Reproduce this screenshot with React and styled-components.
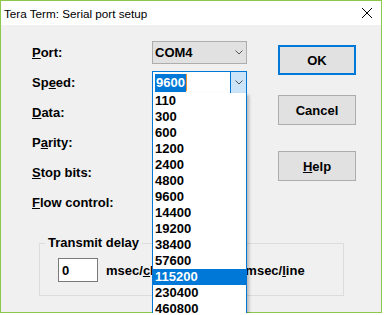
import React from 'react';
import styled, { createGlobalStyle } from 'styled-components';

const GlobalStyle = createGlobalStyle`
  html, body {
    margin: 0;
    padding: 0;
    background: #fff;
    overflow: hidden;
  }
  body {
    font-family: "Liberation Sans", Arial, sans-serif;
  }
`;

const Window = styled.div`
  width: 382px;
  height: 313px;
  box-sizing: border-box;
  border: 1px solid #8cc84b;
  display: flex;
  flex-direction: column;
  background: #f0f0f0;
`;

const TitleBar = styled.div`
  height: 24px;
  flex: none;
  background: #fff;
  display: flex;
  align-items: center;
  justify-content: space-between;
  padding: 0 9px 0 3px;
  font-size: 11.7px;
  color: #000;
`;

const Client = styled.div`
  flex: 1;
  padding: 16px 0 0 31px;
  font-size: 13px;
  font-weight: bold;
  color: #000;
`;

const Top = styled.div`
  display: flex;
  align-items: flex-start;
`;

const Form = styled.div`
  display: grid;
  grid-template-columns: 120px 95px;
  grid-auto-rows: 23px;
  row-gap: 7px;
  align-items: center;
`;

const Label = styled.span`
  line-height: 16px;
`;

const U = styled.span`
  text-decoration: underline;
  text-underline-offset: 1px;
`;

const Combo = styled.div`
  position: relative;
  height: 23px;
  box-sizing: border-box;
  display: flex;
  align-items: center;
  border: 1px solid ${({ active }) => (active ? '#0078d7' : '#adadad')};
  background: ${({ active }) => (active ? '#fff' : '#e1e1e1')};
`;

const ComboText = styled.div`
  flex: 1;
  padding-left: 2px;
  display: flex;
  align-items: center;
`;

const Selected = styled.span`
  background: #0078d7;
  color: #fff;
  padding: 1px;
  line-height: 16px;
`;

const Caret = styled.span`
  width: 1px;
  height: 17px;
  background: #f0902c;
`;

const Arrow = styled.div`
  width: 15px;
  align-self: stretch;
  display: flex;
  align-items: center;
  justify-content: center;
  border-left: 1px solid ${({ active }) => (active ? '#0078d7' : 'transparent')};
  background: ${({ active }) => (active ? '#cce4f7' : 'transparent')};
`;

const DropList = styled.div`
  position: absolute;
  top: 100%;
  left: -1px;
  width: 95px;
  box-sizing: border-box;
  border: 1px solid #0078d7;
  border-top: none;
  background: #fff;
  box-shadow: 2px 2px 3px rgba(0, 0, 0, 0.25);
  z-index: 5;
`;

const Option = styled.div`
  height: 16px;
  line-height: 16px;
  padding-left: 2px;
  background: ${({ selected }) => (selected ? '#0078d7' : 'transparent')};
  color: ${({ selected }) => (selected ? '#fff' : '#000')};
`;

const Buttons = styled.div`
  display: flex;
  flex-direction: column;
  margin: 4px 0 0 31px;
`;

const Button = styled.button`
  width: 78px;
  height: 30px;
  box-sizing: border-box;
  margin-top: ${({ gap }) => gap || 0}px;
  background: #e1e1e1;
  border: ${({ primary }) => (primary ? '2px solid #0078d7' : '1px solid #adadad')};
  font: inherit;
  color: #000;
  padding: 0;
`;

const Group = styled.fieldset`
  margin: 21px 0 0 7px;
  width: 305px;
  box-sizing: border-box;
  border: 1px solid #dcdcdc;
  padding: 0;
  min-width: 0;
`;

const Legend = styled.legend`
  margin-left: 5px;
  padding: 0 3px;
  line-height: 16px;
`;

const GroupRow = styled.div`
  display: flex;
  align-items: center;
  padding: 7px 0 13px 18px;
`;

const Field = styled.div`
  width: 40px;
  height: 24px;
  box-sizing: border-box;
  border: 1px solid #7a7a7a;
  background: #fff;
  padding-left: 3px;
  display: flex;
  align-items: center;
  margin-left: ${({ gap }) => gap || 0}px;
`;

const Unit = styled.span`
  margin-left: 8px;
`;

function Chevron() {
  return (
    <svg width="8" height="5" viewBox="0 0 8 5">
      <polyline points="0.5,0.5 4,4 7.5,0.5" fill="none" stroke="#555" strokeWidth="1" />
    </svg>
  );
}

const speeds = [
  '110', '300', '600', '1200', '2400', '4800', '9600', '14400',
  '19200', '38400', '57600', '115200', '230400', '460800',
];

function Select({ value }) {
  return (
    <Combo>
      <ComboText>{value}</ComboText>
      <Arrow>
        <Chevron />
      </Arrow>
    </Combo>
  );
}

export default function App() {
  return (
    <>
      <GlobalStyle />
      <Window>
        <TitleBar>
          <span>Tera Term: Serial port setup</span>
          <svg width="10" height="10" viewBox="0 0 10 10">
            <path d="M0 0 L10 10 M10 0 L0 10" stroke="#000" strokeWidth="1" />
          </svg>
        </TitleBar>
        <Client>
          <Top>
            <Form>
              <Label><U>P</U>ort:</Label>
              <Select value="COM4" />
              <Label>Sp<U>e</U>ed:</Label>
              <Combo active>
                <ComboText>
                  <Selected>9600</Selected>
                  <Caret />
                </ComboText>
                <Arrow active>
                  <Chevron />
                </Arrow>
                <DropList>
                  {speeds.map((s) => (
                    <Option key={s} selected={s === '115200'}>{s}</Option>
                  ))}
                </DropList>
              </Combo>
              <Label><U>D</U>ata:</Label>
              <Select />
              <Label>P<U>a</U>rity:</Label>
              <Select />
              <Label><U>S</U>top bits:</Label>
              <Select />
              <Label><U>F</U>low control:</Label>
              <Select />
            </Form>
            <Buttons>
              <Button primary>OK</Button>
              <Button gap={20}>Cancel</Button>
              <Button gap={26}><U>H</U>elp</Button>
            </Buttons>
          </Top>
          <Group>
            <Legend>Transmit delay</Legend>
            <GroupRow>
              <Field>0</Field>
              <Unit>msec/<U>c</U>har</Unit>
              <Field gap={27} />
              <Unit>msec/<U>l</U>ine</Unit>
            </GroupRow>
          </Group>
        </Client>
      </Window>
    </>
  );
}
